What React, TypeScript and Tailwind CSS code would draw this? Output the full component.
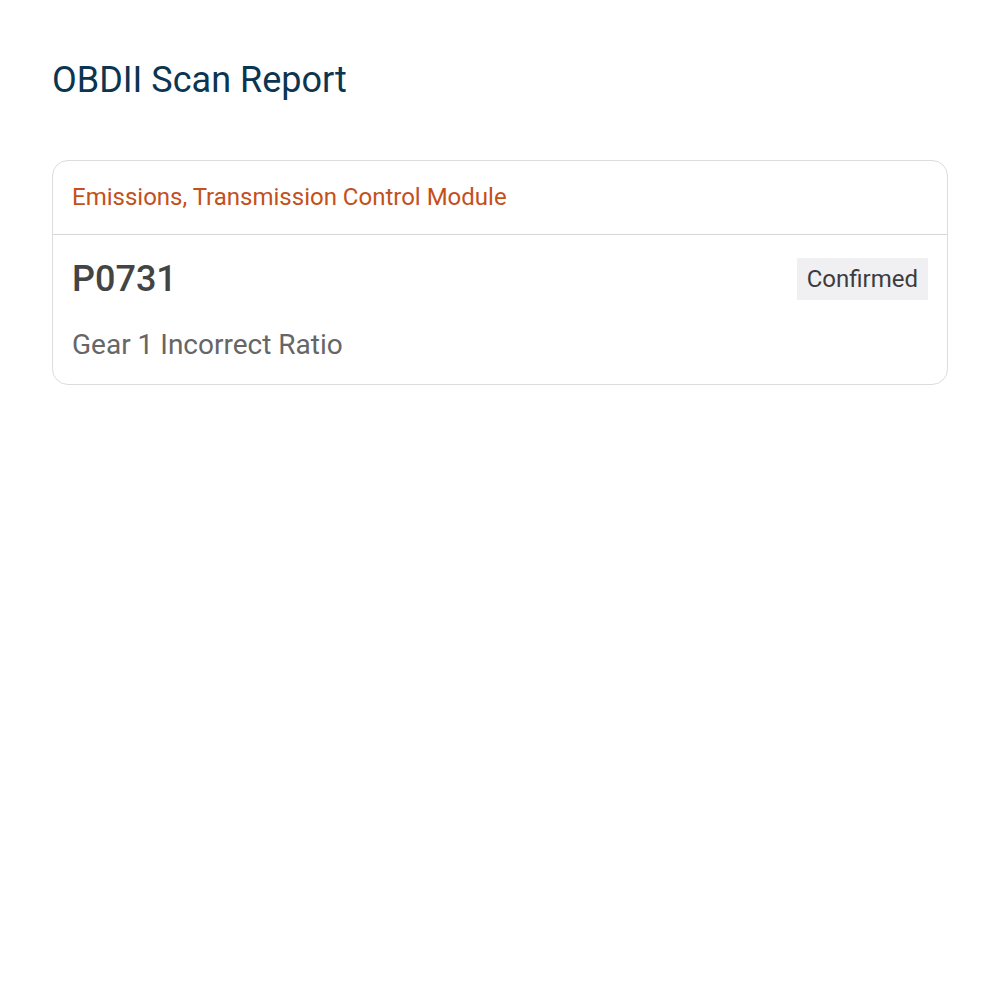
export default function App() {
  return (
    <div className="min-h-screen bg-white px-[52px] pt-[55px]" style={{ fontFamily: "Roboto, 'Noto Sans', sans-serif" }}>
      <h1 className="text-[36px] leading-[50px] text-[#0b3550]">OBDII Scan Report</h1>
      <div className="mt-[55px] rounded-[16px] border border-[#dcdcdc]">
        <div className="flex h-[73px] items-center px-[19px] pb-[1px] text-[24px] text-[#c4501a]">
          Emissions, Transmission Control Module
        </div>
        <div className="border-t border-[#d6d6d6] px-[19px] pb-[22px] pt-[23px]">
          <div className="flex items-center justify-between">
            <div className="text-[36px] font-medium leading-[42px] text-[#444444]">P0731</div>
            <div className="bg-[#f0f0f2] px-[10px] py-[7px] text-[24px] leading-[28px] text-[#3c3c40]">Confirmed</div>
          </div>
          <div className="mt-[28px] text-[28px] leading-[34px] text-[#666666]">Gear 1 Incorrect Ratio</div>
        </div>
      </div>
    </div>
  );
}
